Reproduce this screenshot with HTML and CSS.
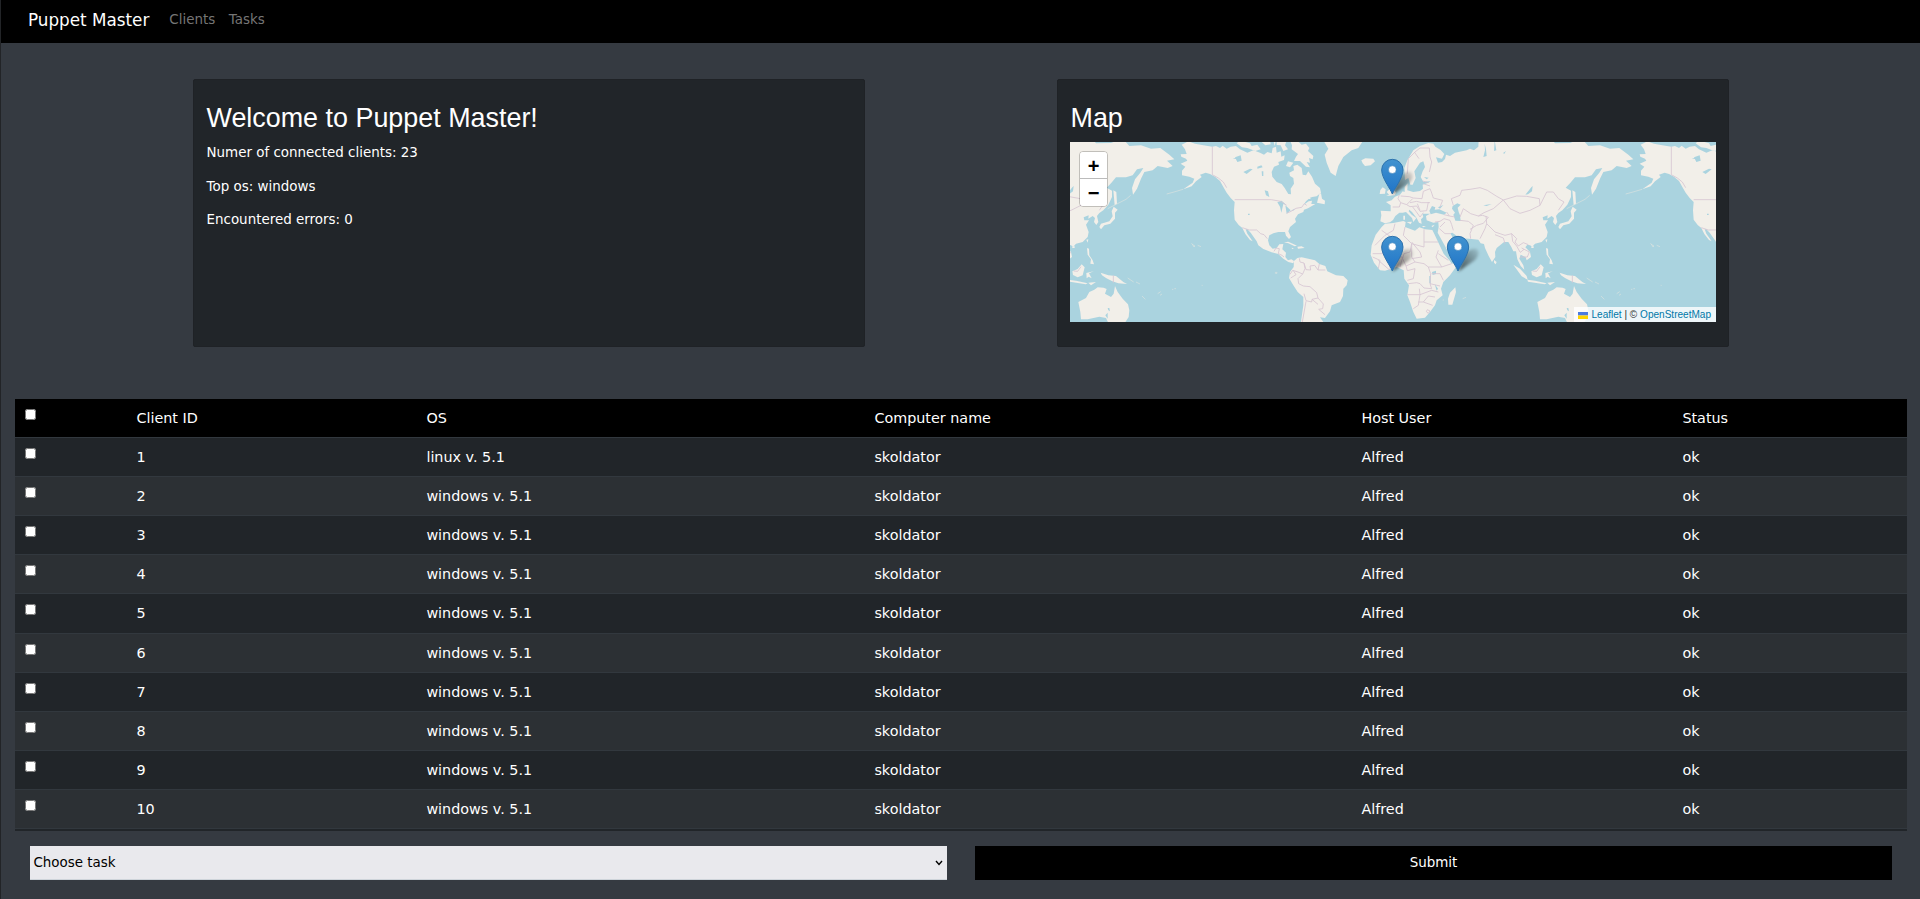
FILE: index.html
```html
<!DOCTYPE html>
<html lang="en">
<head>
<meta charset="utf-8">
<title>Puppet Master</title>
<link rel="stylesheet" href="styles.css">
</head>
<body>
<nav class="navbar">
  <a class="brand">Puppet Master</a>
  <a class="nav-link">Clients</a>
  <a class="nav-link">Tasks</a>
</nav>
<main>
  <div class="cards">
    <section class="card">
      <h2>Welcome to Puppet Master!</h2>
      <p>Numer of connected clients: 23</p>
      <p>Top os: windows</p>
      <p>Encountered errors: 0</p>
    </section>
    <section class="card">
      <h2>Map</h2>
      <div class="map">
        <svg class="map-canvas" viewBox="0 0 1938 540">
          <defs>
            <linearGradient id="pinFill" x1="0" y1="0" x2="0" y2="1">
              <stop offset="0" stop-color="#4293cf"/><stop offset="1" stop-color="#1f74c8"/>
            </linearGradient>
            <linearGradient id="shade" x1="0" y1="1" x2="1" y2="0">
              <stop offset="0" stop-color="#000" stop-opacity=".65"/><stop offset="1" stop-color="#000" stop-opacity=".08"/>
            </linearGradient>
            <filter id="soft" x="-30%" y="-30%" width="160%" height="160%"><feGaussianBlur stdDeviation="5"/></filter>
            <g id="pin">
              <path filter="url(#soft)" fill="url(#shade)" d="M0 0L18-48Q34-72 56-68Q70-56 50-34Z"/>
              <path fill="url(#pinFill)" stroke="#2c72ad" stroke-width="3" d="M0-2C-6-18-32-50-32-74A32 32 0 0 1 32-74C32-50 6-18 0-2Z"/>
              <circle cy="-75" r="11.5" fill="#fff" stroke="#2f76b0" stroke-width="1.5"/>
            </g>
            <g id="world">
              <g transform="translate(270)">
                <path class="land" d="M65 8L85-2 105 5 130 10 157 14 168 12 180 18 188 11 200 20 212 14 228 12 240 22 262 32 280 25 300 32 312 38 322 30 335 34 338 18 348 14 350 32 362 28 364 44 374 40 372 54 355 60 357 68 342 74 335 90 337 104 350 120 365 126 374 138 385 156 393 157 392 140 402 125 400 108 390 102 388 92 402 85 400 72 412 68 425 78 428 98 438 100 445 88 456 104 465 125 480 138 483 152 470 163 452 166 438 178 431 188 446 178 456 176 454 186 466 186 444 199 432 203 430 210 414 217 405 230 408 240 390 255 385 268 393 285 387 291 378 281 375 270 355 270 340 274 328 280 324 295 328 310 338 320 350 318 358 307 370 306 367 322 378 332 376 345 384 355 394 352 402 357 400 364 385 360 370 350 355 336 335 331 310 321 295 310 290 298 272 272 262 262 257 262 262 275 278 298 270 294 256 276 247 258 236 249 224 233 222 205 224 180 212 168 200 152 190 135 180 117 165 104 150 96 137 92 120 98 125 105 108 118 95 133 70 142 98 122 103 110 88 104 66 100 66 86 76 74 62 65 82 56 78 50 64 44 62 37 80 36 75 22Z"/>
                <path class="land" d="M402 357L412 348 425 346 445 350 465 355 478 366 496 372 502 388 528 400 550 402 563 415 560 430 550 440 549 462 540 480 515 490 510 508 495 528 480 526 490 540 475 560 420 560 430 490 430 465 413 450 400 430 387 408 390 390 401 375Z"/>
                <path class="land" d="M490-5H610L595 18 575 25 550 45 535 72 527 102 512 92 500 62 494 38 505 20ZM604 55L616 49 640 50 645 58 632 70 615 72 608 64ZM478 155L483 154 486 170 495 176 494 187 471 182ZM372 301L385 299 411 311 404 313 385 304ZM412 314L425 313 434 318 414 320ZM395 317L402 319 396 321Z"/>
                <path class="land" d="M240-5L270 4 275 12 292 8 302 22 286 27 262 18 246 16 230 4ZM300-5L330-5 332 7 316 10ZM350-5L380-5 375 10 384 22 370 27 362 10 350 9ZM390-5H410L425 8 438 5 448 18 444 27 460 42 458 52 447 48 450 62 440 60 450 76 438 74 420 57 402 57 408 44 414 36 395 22 396 10ZM384 58L400 62 390 76 378 72ZM440 170L455 166 450 171ZM340-5L348-5 344 12Z"/>
                <path class="lake" d="M225 46L242 40 245 56 232 60ZM250 90L270 80 278 82 260 96ZM352 181L365 176 378 188 370 186 364 212 360 194ZM376 190L392 205 380 215ZM314 145L324 148 328 165 318 160ZM292 74L304 70 308 76 292 80ZM218 50L234 46 240 52ZM264 215h5v4h-5zM392 206l12-6-2 5zM305 88h5v14h-4z"/>
                <path class="land speck" d="M95 305l5 4 5 3-3 3-4-7zM346 391h5v3h-5zM36 442h4M0 460l6-4M20 156l22-6 27-8M125 430h3"/>
                <path class="border" d="M157 14V98L175 108 190 120 200 137M224 173H334L362 178 380 190M380 214L395 207 408 199 425 196 433 185 440 190M247 257L268 264H290L302 275 312 278 322 290M342 328L348 318 358 320 355 335 366 340 372 345M418 349L420 360 432 363 438 383 452 384 450 372 464 370 474 384 478 366M474 384H496M432 364L435 380 428 396 414 390 398 385 390 397M428 396L414 410 416 425 430 432 450 434 470 452 474 468 456 472 455 480 438 476 432 455M474 468L490 486 488 500 476 502 495 518M438 478L427 540M400 386L408 398 392 408M456 472L474 487"/>
              </g>
              <g transform="translate(900)">
                <path class="land" d="M103 78L112 55 130 25 150 12 175 3 190 5 196 14 212 24 223 36 216 50 198 46 204 62 216 60 225 51 228 38 240 42 255 32 290 25 300 20 312 25 325 14 326-5H548L555 4 600 3 620-5H640L655 12 690 10 720 20 748 18 775 38 790 52 768 56 785 72 770 78 740 72 725 85 700 90 690 110 678 140 666 158 663 138 672 112 688 92 697 78 678 82 665 100 645 106 615 106 600 124 587 137 603 146 603 165 592 188 577 205 565 213 558 222 562 240 556 249 549 240 552 228 545 222 532 230 533 220 518 226 520 235 534 235 525 248 533 270 530 285 515 300 495 305 487 314 480 310 472 308 466 316 480 330 483 345 470 355 467 346 452 338 448 350 460 370 463 383 452 372 442 352 438 328 430 328 424 315 415 300 402 300 380 318 375 330 376 345 366 360 356 342 345 318 342 306 332 304 325 293 305 291 277 289 264 284 247 272 241 274 250 290 262 298 275 295 288 306 281 325 245 348 239 340 225 312 210 285 203 272 206 255 205 240 190 242 170 235 168 222 180 215H157L160 225 153 232 155 245 147 242 140 228 126 210 118 203 116 208 125 218 139 228 130 240 126 228 108 210 98 212 88 212 76 222 69 234 60 241 45 244 31 238 34 220 32 206 62 208 62 190 48 180 65 175 75 164 90 158 98 148 104 150 104 134 113 124 112 145 130 150 150 147 159 140 158 128 175 122 182 118 160 119 152 105 158 88 165 75 160 58 150 62 133 88 137 108 128 128 121 128 115 108 105 114Z"/>
                <path class="land" d="M45 245L70 243 100 237 107 240 105 255 135 266 148 256 165 262 187 264 193 276 206 304 221 335 238 355 245 365 264 359 258 375 240 400 220 420 213 440 218 460 200 475 195 490 180 510 165 527 140 530 130 510 120 480 112 460 117 430 103 410 101 385 80 375 45 386 30 385 12 362 2 338 5 310 17 278 35 255Z"/>
                <path class="land" d="M256 436L258 450 247 488 235 488 234 470 240 452ZM48 162L57 158 50 150 60 140 50 128 52 108 62 110 60 120 72 142 78 152 74 160ZM29 156L31 144 38 136 47 142 45 155ZM110 240L126 239 122 247ZM156 252H168L160 256ZM184 252L194 248 188 256ZM100 221h5v12h-5z"/>
                <path class="lake" d="M178 206L186 192 196 196 194 203 208 202 230 212 222 218 198 212 182 217ZM204 196L220 189 210 200ZM248 192L262 184 272 188 263 197 266 210 270 220 272 237 256 236 250 218 255 212 246 200ZM344 5L348 22 350 42 340 45 345 25ZM466 158L484 136 488 132 486 148 474 157ZM186 390L198 386 198 396 188 399ZM178 402L182 402 182 426 178 422ZM194 426L204 440 200 446ZM340 190L365 186 350 192ZM374-5L379 25 372 27ZM400 32l8-5-6 10zM162 105l14 2-6 5z"/>
                <path class="border" d="M112 95L115 50 135 30 150 18 178 18 180 45 185 60 178 90M133 30L147 50M88 158L84 170 92 182 88 195 68 195M92 162L118 164 130 168 156 170 160 148 180 140 184 150 190 168 218 175 210 195M92 182L110 188 128 170M110 188L120 194 140 192 150 208 170 206 175 180M120 182L140 178 155 182 180 182M128 195L138 208 150 225 160 212M150 205L142 185M160 125L180 132M158 117L175 122M195 240L210 238 222 230 240 235 245 248 250 265M230 210L238 222 255 225M222 218L238 222M210 255L225 240M208 260L225 275 242 275M240 348L262 332 265 315M250 190L244 170 270 160 275 145 300 142 330 137 352 145 380 163 400 174M270 235L295 238 310 250 300 275 302 290M270 225L280 200 302 215 325 222 338 220 355 226 340 244 320 250 300 262M325 222L342 212 370 200 400 174 440 162 470 163 508 170 510 190 480 205 450 214 420 200 400 174M510 190L530 150 550 150 565 170 582 180 565 205M348 222L350 245 345 260 330 290M350 245L375 270 405 280 425 275 440 290 435 300 445 312 460 302 475 308M375 278L400 288 405 305M425 275L428 298 440 312 450 330M455 318L478 330 472 345 450 345M462 322L450 332"/>
                <path class="border" d="M105 255L100 280 125 305 120 330 102 335M75 245L70 265 45 280 15 310M35 265L70 290 98 302M162 262V300H204M125 305L162 315V300M125 305L125 345 135 360 162 365 175 375 215 375 245 365M102 335L98 350 108 372 135 360M205 325L198 345 215 375M205 335L235 355M40 302L38 335 8 335M8 345L30 355 25 380M40 335L60 352 60 380M60 345L98 345 90 375M108 372L112 386 135 380 130 410 112 415M175 375L182 395 180 425 185 440 162 438 150 425 140 422 115 425M185 395L210 395 220 415M180 425L210 432M148 440L150 458H112M150 458L185 445 205 450M150 458L145 490 130 500M145 480L160 480 175 462 195 465M160 480L188 490M172 503l8 4-5 7-6-5zM25 355L60 385M125 300L150 330 155 345 125 350"/>
                <path class="land" d="M565 255L570 245 595 238 605 223 602 208 608 194 620 203 612 212 612 230 598 245 580 250 570 262ZM607 145L616 150 618 185 611 190ZM430 368L450 380 470 402 473 413 455 403ZM472 413L495 416 530 424 524 427 474 419ZM484 388L500 381 512 367 521 376 515 400 500 406 486 399ZM526 393L548 388 534 394 542 409 533 404 527 409ZM569 392L592 400 615 402 637 420 648 426 622 424 604 418 585 408 573 400ZM528 318L534 320 535 340 545 355 549 367 538 365 540 352 530 338ZM372 354L380 360 377 367 372 362ZM526 293L532 292 530 302ZM484 313h7v5h-7zM532 422L555 420 540 430ZM635 408l10-5M660 440l8 6M560 381l4 10"/>
                <path class="land" d="M502 480L525 468 535 450 550 443 560 436 578 437 587 441 582 455 600 465 608 455 612 432 620 450 635 470 651 487 655 505 653 525 640 545 600 560 585 528 565 524 530 532 510 532 508 510Z"/>
                <path class="lake" d="M590 498h5l2 10-5-3zM583 520L590 512 590 530Z"/>
                <path class="border" d="M607 400V422M488 387L500 388 510 374"/>
                <path class="land speck" d="M650 408l18 12M675 420l12 6M693 462l10 10M740 455l9-6M860 310l10 4M790 440h5M218 474h4M278 470l10-4M590 200l55-28 14-12"/>
              </g>
            </g>
          </defs>
          <rect width="1938" height="540" fill="#aad3df"/>
          <use href="#world"/><use href="#world" x="-1377"/><use href="#world" x="1377"/>
          <use href="#pin" x="967" y="158"/><use href="#pin" x="967" y="389"/><use href="#pin" x="1164" y="389"/>
        </svg>
        <div class="zoom"><a>+</a><a>−</a></div>
        <div class="attribution"><svg class="flag" viewBox="0 0 10 7" preserveAspectRatio="none"><path fill="#4C7BE1" d="M0 0h10v3.5H0z"/><path fill="#FFD500" d="M0 3.5h10V7H0z"/></svg><a>Leaflet</a> | © <a>OpenStreetMap</a></div>
      </div>
    </section>
  </div>
  <table class="clients">
    <colgroup><col class="c-check"><col class="c-id"><col class="c-os"><col class="c-name"><col class="c-user"><col></colgroup>
    <thead><tr><td><input type="checkbox"></td><td>Client ID</td><td>OS</td><td>Computer name</td><td>Host User</td><td>Status</td></tr></thead>
    <tbody>
      <tr><td><input type="checkbox"></td><td>1</td><td>linux v. 5.1</td><td>skoldator</td><td>Alfred</td><td>ok</td></tr>
      <tr><td><input type="checkbox"></td><td>2</td><td>windows v. 5.1</td><td>skoldator</td><td>Alfred</td><td>ok</td></tr>
      <tr><td><input type="checkbox"></td><td>3</td><td>windows v. 5.1</td><td>skoldator</td><td>Alfred</td><td>ok</td></tr>
      <tr><td><input type="checkbox"></td><td>4</td><td>windows v. 5.1</td><td>skoldator</td><td>Alfred</td><td>ok</td></tr>
      <tr class="tall"><td><input type="checkbox"></td><td>5</td><td>windows v. 5.1</td><td>skoldator</td><td>Alfred</td><td>ok</td></tr>
      <tr><td><input type="checkbox"></td><td>6</td><td>windows v. 5.1</td><td>skoldator</td><td>Alfred</td><td>ok</td></tr>
      <tr><td><input type="checkbox"></td><td>7</td><td>windows v. 5.1</td><td>skoldator</td><td>Alfred</td><td>ok</td></tr>
      <tr><td><input type="checkbox"></td><td>8</td><td>windows v. 5.1</td><td>skoldator</td><td>Alfred</td><td>ok</td></tr>
      <tr><td><input type="checkbox"></td><td>9</td><td>windows v. 5.1</td><td>skoldator</td><td>Alfred</td><td>ok</td></tr>
      <tr><td><input type="checkbox"></td><td>10</td><td>windows v. 5.1</td><td>skoldator</td><td>Alfred</td><td>ok</td></tr>
    </tbody>
  </table>
  <form class="task-form">
    <div class="select">Choose task<svg class="chevron" viewBox="0 0 8 6"><path d="M1 1l3 3.5L7 1"/></svg></div>
    <button class="submit" type="button">Submit</button>
  </form>
</main>
<span class="edge-mark"></span>
</body>
</html>
```
FILE: styles.css
```css
* { box-sizing: border-box; }
body {
  position: relative;
  margin: 0;
  height: 899px;
  border-left: 1px solid #222427;
  background: #353a41;
  color: #fff;
  font: 13.45px/20px "DejaVu Sans", sans-serif;
}
.edge-mark {
  position: absolute;
  left: -1px;
  top: 503px;
  width: 1px;
  height: 2px;
  background: #aaa;
}
.navbar {
  display: flex;
  align-items: center;
  height: 43px;
  padding: 0 0 5px 27px;
  background: #000;
}
.brand { font-size: 16.8px; margin-right: 20px; padding-top: 2px; }
.nav-link { margin-right: 13.5px; padding-top: 2px; color: #757575; }
.cards {
  display: grid;
  grid-template-columns: 672px 672px;
  gap: 192px;
  padding: 36px 0 0 192px;
}
.card {
  height: 268px;
  padding: 22px 12px 0 12.5px;
  border: 1px solid #1f2226;
  border-radius: 2px;
  background: #212529;
}
h2 {
  margin: 0 0 9px;
  font: 400 26.9px/32px "Liberation Sans", Arial, sans-serif;
}
.card p { margin: 0 0 13.6px; }
.map { position: relative; height: 180px; margin: -1px 0 0 -0.5px; overflow: hidden; }
.map-canvas { display: block; width: 646px; height: 180px; }
.land { fill: #f2efe9; }
.speck { fill: none; stroke: #dbe3df; stroke-width: 2; }
.lake { fill: #aad3df; }
.border { fill: none; stroke: #d6c5d3; stroke-width: 2.5; stroke-linejoin: round; }
.zoom {
  position: absolute;
  left: 9px;
  top: 9px;
  width: 29px;
  border: 1px solid rgba(0, 0, 0, .2);
  border-radius: 4px;
  background-clip: padding-box;
}
.zoom a {
  display: block;
  height: 27px;
  background: #fff;
  color: #000;
  text-align: center;
  font: bold 20px/29px "Liberation Sans", Arial, sans-serif;
}
.zoom a:first-child { border-bottom: 1px solid #bbb; border-radius: 3px 3px 0 0; }
.zoom a:last-child { border-radius: 0 0 3px 3px; }
.attribution {
  position: absolute;
  right: 0;
  bottom: 0;
  height: 15px;
  padding: 0 5px 0 4px;
  background: rgba(255, 255, 255, .8);
  color: #333;
  font: 10.05px/15px "Liberation Sans", Arial, sans-serif;
  white-space: nowrap;
}
.attribution a { color: #0078a8; }
.flag { width: 10px; height: 7px; margin-right: 3.8px; vertical-align: -0.5px; }
.clients {
  width: 1892px;
  margin: 52px 0 0 14px;
  border-collapse: separate;
  border-spacing: 0;
  table-layout: fixed;
  border-bottom: 2px solid #212529;
  font-size: 14.35px;
}
.c-check { width: 112px; }
.c-id { width: 290px; }
.c-os { width: 448px; }
.c-name { width: 487px; }
.c-user { width: 321px; }
.clients td { height: 39px; padding: 0 9px 0 9.4px; border-bottom: 1px solid #32383e; }
.clients .tall td { height: 40px; padding-bottom: 1px; }
.clients thead { background: #000; }
.clients tbody tr { background: #212529; }
.clients tbody tr:nth-child(even) { background: #2c3034; }
.clients input { display: block; width: 11px; height: 11px; margin: 0 0 7px 0.6px; }
.task-form { display: flex; gap: 28px; padding: 15px 0 0 29px; }
.select, .submit { width: 917px; height: 34px; font: inherit; }
.select {
  display: flex;
  align-items: center;
  justify-content: space-between;
  padding: 0 4px 0 3.4px;
  border-bottom: 1px solid #ced4da;
  background: #e9e9ed;
  color: #000;
}
.chevron { width: 8px; height: 6px; fill: none; stroke: #000; stroke-width: 1.4; }
.submit { padding: 0 0 1px; border: 0; background: #000; color: #fff; }
```
